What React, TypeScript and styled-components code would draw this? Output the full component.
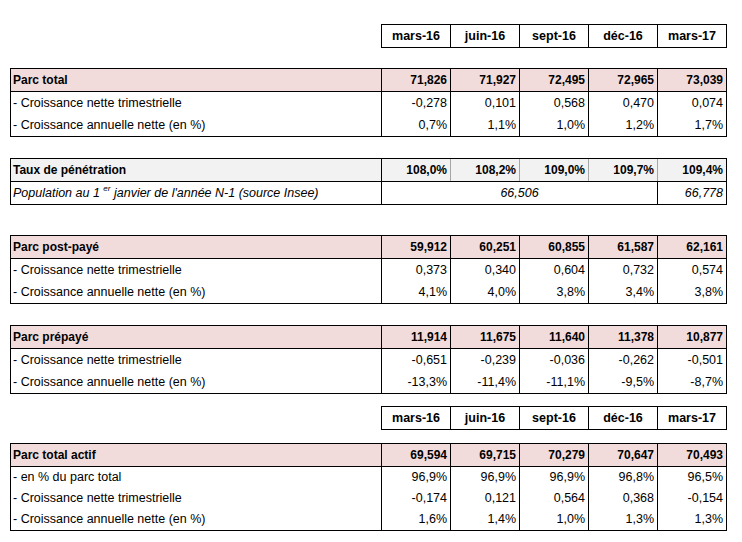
import React from 'react';
import styled, { createGlobalStyle } from 'styled-components';

const GlobalStyle = createGlobalStyle`
  html, body {
    margin: 0;
    padding: 0;
    background: #fff;
  }
  body {
    font-family: 'Liberation Sans', Arial, sans-serif;
    font-size: 12.5px;
    color: #000;
  }
`;

type Tone = 'pink' | 'grey' | 'plain';

interface BlockRow {
  label: string;
  values: string[];
}

interface BlockData {
  title: string;
  values: string[];
  rows: BlockRow[];
  top: number;
}

const PERIODS = ['mars-16', 'juin-16', 'sept-16', 'déc-16', 'mars-17'];

const blocks: BlockData[] = [
  {
    title: 'Parc total',
    values: ['71,826', '71,927', '72,495', '72,965', '73,039'],
    rows: [
      { label: '- Croissance nette trimestrielle', values: ['-0,278', '0,101', '0,568', '0,470', '0,074'] },
      { label: '- Croissance annuelle nette (en %)', values: ['0,7%', '1,1%', '1,0%', '1,2%', '1,7%'] },
    ],
    top: 20,
  },
];

const blocksMiddle: BlockData[] = [
  {
    title: 'Parc post-payé',
    values: ['59,912', '60,251', '60,855', '61,587', '62,161'],
    rows: [
      { label: '- Croissance nette trimestrielle', values: ['0,373', '0,340', '0,604', '0,732', '0,574'] },
      { label: '- Croissance annuelle nette (en %)', values: ['4,1%', '4,0%', '3,8%', '3,4%', '3,8%'] },
    ],
    top: 30,
  },
  {
    title: 'Parc prépayé',
    values: ['11,914', '11,675', '11,640', '11,378', '10,877'],
    rows: [
      { label: '- Croissance nette trimestrielle', values: ['-0,651', '-0,239', '-0,036', '-0,262', '-0,501'] },
      { label: '- Croissance annuelle nette (en %)', values: ['-13,3%', '-11,4%', '-11,1%', '-9,5%', '-8,7%'] },
    ],
    top: 21,
  },
];

const activeBlock: BlockData = {
  title: 'Parc total actif',
  values: ['69,594', '69,715', '70,279', '70,647', '70,493'],
  rows: [
    { label: '- en % du parc total', values: ['96,9%', '96,9%', '96,9%', '96,8%', '96,5%'] },
    { label: '- Croissance nette trimestrielle', values: ['-0,174', '0,121', '0,564', '0,368', '-0,154'] },
    { label: '- Croissance annuelle nette (en %)', values: ['1,6%', '1,4%', '1,0%', '1,3%', '1,3%'] },
  ],
  top: 13,
};

const Sheet = styled.div`
  padding: 24px 0 0 10px;
  width: 717px;
`;

const PeriodBox = styled.div<{ $top: number }>`
  display: flex;
  margin: ${p => p.$top}px 0 0 371px;
  border: 1px solid #000;
  width: 344px;
`;

const PeriodCell = styled.div`
  width: 68px;
  height: 22px;
  line-height: 22px;
  text-align: center;
  font-weight: bold;
  border-right: 1px solid #000;
  &:last-child {
    border-right: none;
  }
`;

const Block = styled.div<{ $top: number }>`
  margin-top: ${p => p.$top}px;
  border: 1px solid #000;
`;

const Row = styled.div<{ $tone?: Tone; $ruled?: boolean; $height?: number }>`
  display: flex;
  height: ${p => p.$height ?? 22}px;
  line-height: ${p => p.$height ?? 22}px;
  background: ${p => (p.$tone === 'pink' ? '#f2dcdb' : p.$tone === 'grey' ? '#f2f2f2' : '#fff')};
  border-bottom: ${p => (p.$ruled ? '1px solid #000' : 'none')};
  font-weight: ${p => (p.$tone === 'plain' || !p.$tone ? 'normal' : 'bold')};
  font-size: ${p => (p.$tone === 'plain' || !p.$tone ? '12.5px' : '12px')};
`;

const Label = styled.div<{ $italic?: boolean }>`
  width: 368px;
  padding-left: 2px;
  border-right: 1px solid #000;
  white-space: nowrap;
  font-style: ${p => (p.$italic ? 'italic' : 'normal')};
`;

const Value = styled.div<{ $soft?: boolean; $italic?: boolean }>`
  width: 65px;
  padding-right: 3px;
  text-align: right;
  border-right: 1px solid ${p => (p.$soft ? '#a6a6a6' : '#000')};
  font-style: ${p => (p.$italic ? 'italic' : 'normal')};
  &:last-child {
    border-right: none;
  }
`;

const Merged = styled.div`
  width: 275px;
  text-align: center;
  font-style: italic;
  border-right: 1px solid #000;
`;

const Sup = styled.sup`
  font-size: 8px;
  line-height: 0;
  vertical-align: 6px;
`;

const Periods: React.FC<{ top: number }> = ({ top }) => (
  <PeriodBox $top={top}>
    {PERIODS.map(p => (
      <PeriodCell key={p}>{p}</PeriodCell>
    ))}
  </PeriodBox>
);

const DataBlock: React.FC<{ data: BlockData; rowHeight?: number }> = ({ data, rowHeight }) => (
  <Block $top={data.top}>
    <Row $tone="pink" $ruled>
      <Label>{data.title}</Label>
      {data.values.map((v, i) => (
        <Value key={i}>{v}</Value>
      ))}
    </Row>
    {data.rows.map(r => (
      <Row key={r.label} $height={rowHeight}>
        <Label>{r.label}</Label>
        {r.values.map((v, i) => (
          <Value key={i}>{v}</Value>
        ))}
      </Row>
    ))}
  </Block>
);

const App: React.FC = () => (
  <>
    <GlobalStyle />
    <Sheet>
      <Periods top={0} />

      {blocks.map(b => (
        <DataBlock key={b.title} data={b} />
      ))}

      {/* Taux de pénétration */}
      <Block $top={21}>
        <Row $tone="grey" $ruled>
          <Label>Taux de pénétration</Label>
          {['108,0%', '108,2%', '109,0%', '109,7%', '109,4%'].map((v, i) => (
            <Value key={i} $soft>{v}</Value>
          ))}
        </Row>
        <Row>
          <Label $italic>
            Population au 1 <Sup>er</Sup> janvier de l'année N-1 (source Insee)
          </Label>
          <Merged>66,506</Merged>
          <Value $italic>66,778</Value>
        </Row>
      </Block>

      {blocksMiddle.map(b => (
        <DataBlock key={b.title} data={b} />
      ))}

      <Periods top={12} />
      <DataBlock data={activeBlock} rowHeight={21} />
    </Sheet>
  </>
);

export default App;
